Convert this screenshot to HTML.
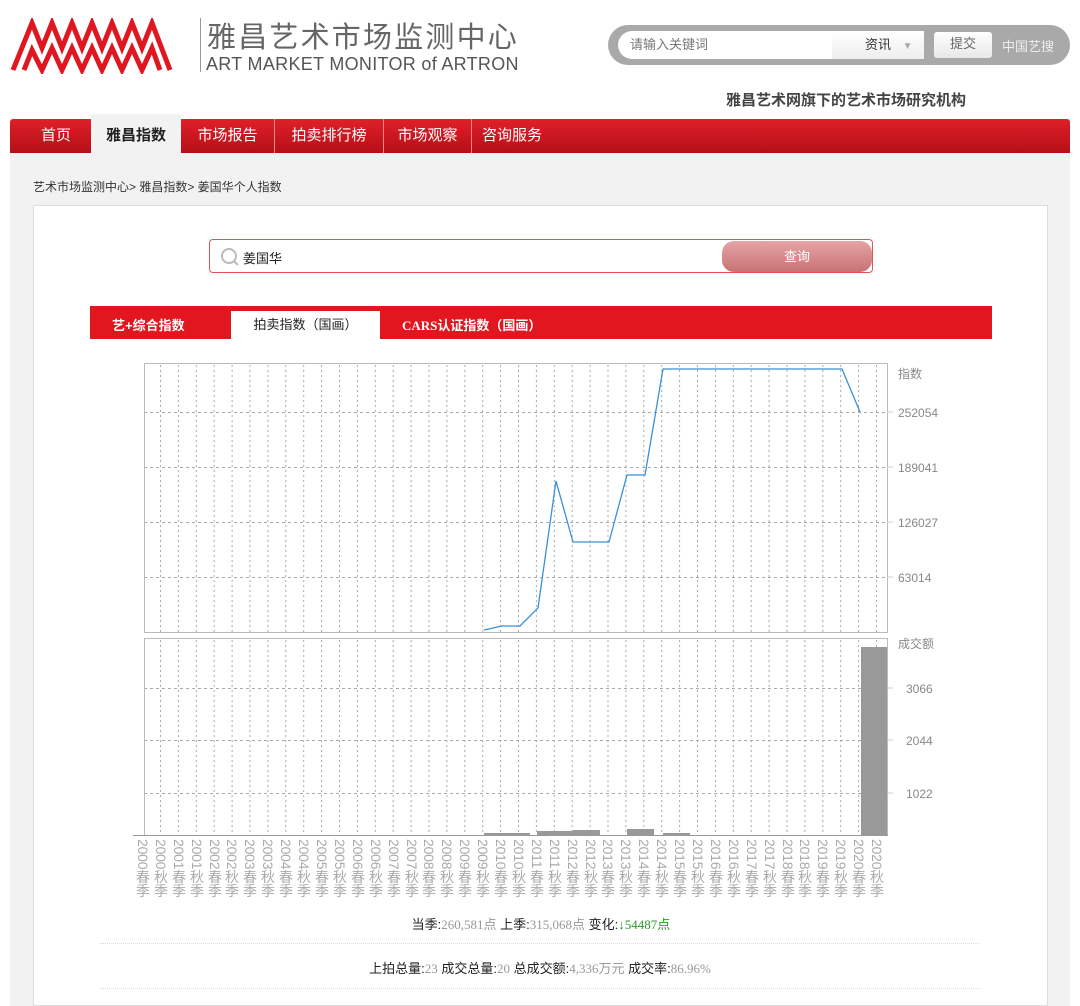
<!DOCTYPE html>
<html><head><meta charset="utf-8"><style>
*{margin:0;padding:0;box-sizing:border-box}
body{width:1080px;height:1006px;background:#fff;font-family:"Liberation Sans","Noto Sans CJK SC",sans-serif;position:relative;overflow:hidden;color:#333}
.abs{position:absolute}
.nav{left:10px;top:119px;width:1060px;height:34px;background:linear-gradient(#e0202a,#b50f16);border-radius:3px 3px 0 0}
.nav span{position:absolute;top:0;height:34px;line-height:34px;color:#fff;font-size:15px;text-align:center}
.sep{border-right:1px solid #e88}
.xl{position:absolute;top:838px;width:16px;font-size:14px;color:#aaa;line-height:14px;text-align:center;white-space:nowrap}
.xl i{display:block;font-style:normal;writing-mode:vertical-rl;height:32px;line-height:16px;letter-spacing:-0.2px;margin:0 auto}
</style></head><body>
<!-- logo -->
<svg class="abs" style="left:10px;top:18px" width="185" height="56" viewBox="0 0 185 56">
<g fill="none" stroke="#e01620" stroke-width="5" stroke-linejoin="miter">
<path d="M3 52 L22 5 L32 30 L42 5 L52 30 L62 5 L72 30 L82 5 L92 30 L102 5 L112 30 L122 5 L132 30 L142 5 L160 52"/>
<path d="M14 52 L22 32 L32 52 L42 30 L52 52 L62 30 L72 52 L82 30 L92 52 L102 30 L112 52 L122 30 L132 52 L142 30 L150 52"/>
</g></svg>
<div class="abs" style="left:200px;top:18px;width:1px;height:54px;background:#999"></div>
<div class="abs" style="left:207px;top:14px;font-size:29px;color:#666;letter-spacing:2.2px">雅昌艺术市场监测中心</div>
<div class="abs" style="left:206px;top:54px;font-size:18px;color:#555;letter-spacing:0.3px">ART MARKET MONITOR of ARTRON</div>
<!-- search -->
<div class="abs" style="left:608px;top:25px;width:462px;height:40px;background:#a9a9a9;border-radius:20px"></div>
<div class="abs" style="left:618px;top:31px;width:214px;height:28px;background:#fff;border-radius:14px 0 0 14px;font-size:13px;color:#777;line-height:28px;padding-left:12px">请输入关键词</div>
<div class="abs" style="left:832px;top:31px;width:92px;height:28px;background:linear-gradient(#fff,#eee);font-size:13px;color:#333;line-height:28px;padding-left:33px">资讯 <span style="color:#aaa;font-size:10px;margin-left:8px">▼</span></div>
<div class="abs" style="left:934px;top:32px;width:58px;height:26px;background:linear-gradient(#fff,#e8e8e8);border-radius:3px;font-size:13px;color:#666;line-height:24px;text-align:center">提交</div>
<div class="abs" style="left:1002px;top:36px;font-size:13px;color:#eee">中国艺搜</div>
<div class="abs" style="left:726px;top:89px;font-size:15px;color:#444;font-weight:bold">雅昌艺术网旗下的艺术市场研究机构</div>
<!-- nav -->
<div class="abs nav">
<span style="left:0;width:92px">首页</span>
<span style="left:81px;top:-5px;width:90px;height:39px;line-height:44px;background:#f2f2f2;color:#222;font-weight:bold;border-radius:4px 4px 0 0">雅昌指数</span>
<span class="sep" style="left:171px;width:94px">市场报告</span>
<span class="sep" style="left:265px;width:109px">拍卖排行榜</span>
<span class="sep" style="left:374px;width:88px">市场观察</span>
<span style="left:462px;width:80px">咨询服务</span>
</div>
<div class="abs" style="left:10px;top:153px;width:1060px;height:853px;background:#f2f2f2"></div>
<div class="abs" style="left:33px;top:178px;font-size:12px;color:#333">艺术市场监测中心&gt; 雅昌指数&gt; 姜国华个人指数</div>
<div class="abs" style="left:33px;top:205px;width:1015px;height:801px;background:#fff;border:1px solid #ddd"></div>
<!-- query -->
<div class="abs" style="left:209px;top:239px;width:664px;height:34px;border:1px solid #e85058;border-radius:4px;background:#fff"></div>
<svg class="abs" style="left:220px;top:247px" width="20" height="20"><circle cx="9" cy="9" r="7" fill="none" stroke="#bbb" stroke-width="2"/><path d="M14 14l4 4" stroke="#bbb" stroke-width="2"/></svg>
<div class="abs" style="left:243px;top:248px;font-size:13px;color:#222">姜国华</div>
<div class="abs" style="left:722px;top:241px;width:150px;height:31px;border-radius:12px;background:linear-gradient(#e7a4a6,#c87274);color:#fff;font-size:13px;text-align:center;line-height:31px">查询</div>
<!-- tabs -->
<div class="abs" style="left:90px;top:306px;width:902px;height:33px;background:#e2161f"></div>
<div class="abs" style="left:112px;top:315px;font-size:13px;color:#fff;font-weight:bold">艺+综合指数</div>
<div class="abs" style="left:231px;top:311px;width:149px;height:28px;background:#fff;font-size:13px;color:#222;text-align:center;line-height:28px">拍卖指数（国画）</div>
<div class="abs" style="left:402px;top:315px;font-size:13px;color:#fff;font-family:'Liberation Serif','Noto Sans CJK SC',serif;font-weight:bold">CARS认证指数（国画）</div>
<!-- chart -->
<svg class="abs" style="left:0;top:0" width="1080" height="900">
<defs>
<pattern id="vd" x="160" y="0" width="17.9" height="5" patternUnits="userSpaceOnUse"><rect x="0" y="0" width="1" height="2" fill="#aaa"/></pattern>
<pattern id="hd" x="0" y="0" width="6" height="1" patternUnits="userSpaceOnUse"><rect x="0" y="0" width="3" height="1" fill="#aaa"/></pattern>
</defs>
<rect x="145" y="364" width="742" height="268" fill="url(#vd)"/>
<rect x="145" y="639" width="742" height="196" fill="url(#vd)"/>
<rect x="145" y="412" width="742" height="1" fill="url(#hd)"/>
<rect x="145" y="467" width="742" height="1" fill="url(#hd)"/>
<rect x="145" y="522" width="742" height="1" fill="url(#hd)"/>
<rect x="145" y="577" width="742" height="1" fill="url(#hd)"/>
<rect x="145" y="688" width="742" height="1" fill="url(#hd)"/>
<rect x="145" y="740" width="742" height="1" fill="url(#hd)"/>
<rect x="145" y="793" width="742" height="1" fill="url(#hd)"/>
<rect x="144.5" y="363.5" width="743" height="269" fill="none" stroke="#bbb"/>
<rect x="144.5" y="638.5" width="743" height="197" fill="none" stroke="#bbb"/>
<line x1="133" y1="835.5" x2="888" y2="835.5" stroke="#999"/>
<g stroke="#ccc"><line x1="887" y1="412" x2="893" y2="412"/><line x1="887" y1="467" x2="893" y2="467"/><line x1="887" y1="522" x2="893" y2="522"/><line x1="887" y1="577" x2="893" y2="577"/><line x1="887" y1="688" x2="893" y2="688"/><line x1="887" y1="740" x2="893" y2="740"/><line x1="887" y1="793" x2="893" y2="793"/></g>
<polyline fill="none" stroke="#3b8fd8" stroke-width="1.3" points="484,630 502,626 520,626 538,608 556,481 573,542 591,542 609,542 627,475 645,475 663,369 842,369 860,412"/>
<g fill="#999">
<rect x="861" y="647" width="26" height="188"/>
<rect x="484" y="833" width="46" height="2"/>
<rect x="537" y="831" width="36" height="4"/>
<rect x="573" y="830" width="27" height="5"/>
<rect x="627" y="829" width="27" height="6"/>
<rect x="663" y="833" width="27" height="2"/>
</g>
<g font-size="12" fill="#888" font-family="Liberation Sans,Noto Sans CJK SC,sans-serif">
<text x="898" y="378">指数</text><text x="898" y="417">252054</text><text x="898" y="472">189041</text><text x="898" y="527">126027</text><text x="898" y="582">63014</text>
<text x="898" y="648">成交额</text><text x="906" y="693">3066</text><text x="906" y="745">2044</text><text x="906" y="798">1022</text>
</g>
</svg>
<div class="xl" style="left:135px"><i>2000</i>春<br>季</div><div class="xl" style="left:153px"><i>2000</i>秋<br>季</div><div class="xl" style="left:171px"><i>2001</i>春<br>季</div><div class="xl" style="left:189px"><i>2001</i>秋<br>季</div><div class="xl" style="left:207px"><i>2002</i>春<br>季</div><div class="xl" style="left:224px"><i>2002</i>秋<br>季</div><div class="xl" style="left:242px"><i>2003</i>春<br>季</div><div class="xl" style="left:260px"><i>2003</i>秋<br>季</div><div class="xl" style="left:278px"><i>2004</i>春<br>季</div><div class="xl" style="left:296px"><i>2004</i>秋<br>季</div><div class="xl" style="left:314px"><i>2005</i>春<br>季</div><div class="xl" style="left:332px"><i>2005</i>秋<br>季</div><div class="xl" style="left:350px"><i>2006</i>春<br>季</div><div class="xl" style="left:368px"><i>2006</i>秋<br>季</div><div class="xl" style="left:386px"><i>2007</i>春<br>季</div><div class="xl" style="left:404px"><i>2007</i>秋<br>季</div><div class="xl" style="left:421px"><i>2008</i>春<br>季</div><div class="xl" style="left:439px"><i>2008</i>秋<br>季</div><div class="xl" style="left:457px"><i>2009</i>春<br>季</div><div class="xl" style="left:475px"><i>2009</i>秋<br>季</div><div class="xl" style="left:493px"><i>2010</i>春<br>季</div><div class="xl" style="left:511px"><i>2010</i>秋<br>季</div><div class="xl" style="left:529px"><i>2011</i>春<br>季</div><div class="xl" style="left:547px"><i>2011</i>秋<br>季</div><div class="xl" style="left:565px"><i>2012</i>春<br>季</div><div class="xl" style="left:583px"><i>2012</i>秋<br>季</div><div class="xl" style="left:600px"><i>2013</i>春<br>季</div><div class="xl" style="left:618px"><i>2013</i>秋<br>季</div><div class="xl" style="left:636px"><i>2014</i>春<br>季</div><div class="xl" style="left:654px"><i>2014</i>秋<br>季</div><div class="xl" style="left:672px"><i>2015</i>春<br>季</div><div class="xl" style="left:690px"><i>2015</i>秋<br>季</div><div class="xl" style="left:708px"><i>2016</i>春<br>季</div><div class="xl" style="left:726px"><i>2016</i>秋<br>季</div><div class="xl" style="left:744px"><i>2017</i>春<br>季</div><div class="xl" style="left:762px"><i>2017</i>秋<br>季</div><div class="xl" style="left:780px"><i>2018</i>春<br>季</div><div class="xl" style="left:797px"><i>2018</i>秋<br>季</div><div class="xl" style="left:815px"><i>2019</i>春<br>季</div><div class="xl" style="left:833px"><i>2019</i>秋<br>季</div><div class="xl" style="left:851px"><i>2020</i>春<br>季</div><div class="xl" style="left:869px"><i>2020</i>秋<br>季</div>
<div class="abs" style="left:0;width:1080px;top:914px;text-align:center;font-size:13px;color:#222;padding-left:2px">当季:<span style="color:#999;font-family:'Liberation Serif',serif">260,581点</span> 上季:<span style="color:#999;font-family:'Liberation Serif',serif">315,068点</span> 变化:<span style="color:#2a9a2a;font-family:'Liberation Serif',serif">↓54487点</span></div>
<div class="abs" style="left:100px;top:943px;width:880px;border-top:1px dotted #ddd"></div>
<div class="abs" style="left:0;width:1080px;top:958px;text-align:center;font-size:13px;color:#222">上拍总量:<span style="color:#999;font-family:'Liberation Serif',serif">23</span> 成交总量:<span style="color:#999;font-family:'Liberation Serif',serif">20</span> 总成交额:<span style="color:#999;font-family:'Liberation Serif',serif">4,336万元</span> 成交率:<span style="color:#999;font-family:'Liberation Serif',serif">86.96%</span></div>
<div class="abs" style="left:100px;top:988px;width:880px;border-top:1px dotted #ddd"></div>
</body></html>
